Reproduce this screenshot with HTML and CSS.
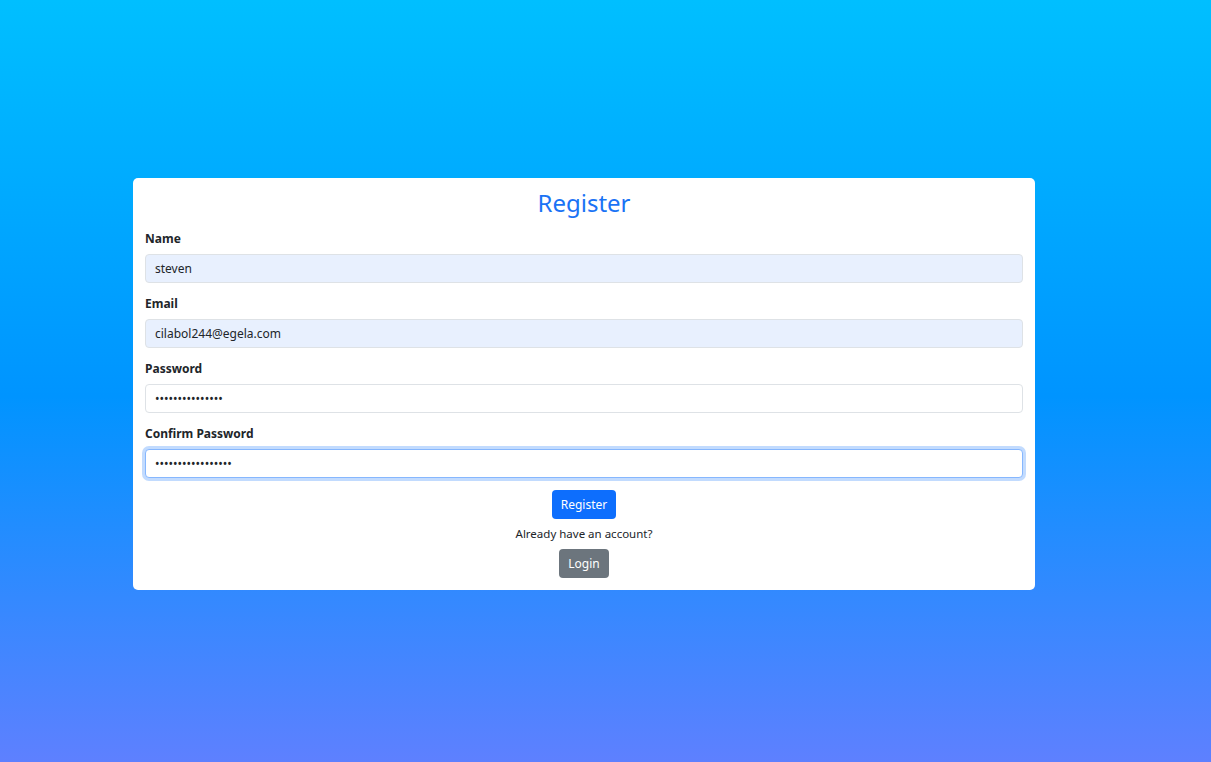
FILE: index.html
```html
<!DOCTYPE html>
<html>
<head>
<meta charset="utf-8">
<link rel="stylesheet" href="styles.css">
</head>
<body>
<div class="page">
  <div class="card">
    <h1 class="title">Register</h1>
    <div class="group">
      <label class="label">Name</label>
      <input class="field autofill" type="text" value="steven">
    </div>
    <div class="group">
      <label class="label">Email</label>
      <input class="field autofill" type="text" value="cilabol244@egela.com">
    </div>
    <div class="group">
      <label class="label">Password</label>
      <input class="field" type="password" value="abcdefghijklmno">
    </div>
    <div class="group">
      <label class="label">Confirm Password</label>
      <input class="field focus" type="password" value="abcdefghijklmnopq">
    </div>
    <div class="actions">
      <button class="btn primary">Register</button>
      <p class="note">Already have an account?</p>
      <button class="btn secondary">Login</button>
    </div>
  </div>
</div>
</body>
</html>
```
FILE: styles.css
```css
* { box-sizing: border-box; }
html, body { margin: 0; height: 100%; }
body {
  font-family: "Noto Sans", "Open Sans", sans-serif;
  background: linear-gradient(to bottom, #00bfff 0%, #0094ff 52%, #5e80ff 100%);
  color: #212529;
}
.page {
  height: 762px;
  display: flex;
  align-items: flex-start;
  padding: 178px 0 0 133px;
}
.card {
  width: 902px;
  background: #fff;
  border-radius: 5px;
  padding: 12px 12px 12px;
}
.title {
  margin: 0 0 14px;
  text-align: center;
  font-weight: 400;
  font-size: 24px;
  line-height: 25px;
  color: #1a73f5;
}
.group { margin-bottom: 11px; }
.label {
  display: block;
  font-size: 12px;
  font-weight: 700;
  line-height: 20px;
  margin-bottom: 5px;
  color: #212529;
}
.field {
  display: block;
  width: 100%;
  height: 29px;
  padding: 0 9px;
  font-family: inherit;
  font-size: 12px;
  color: #212529;
  background: #fff;
  border: 1px solid #dee2e6;
  border-radius: 4px;
  outline: none;
}
.field.autofill { background: #e8f0fe; }
.field.focus {
  border-color: #86b7fe;
  box-shadow: 0 0 0 3px rgba(13, 110, 253, 0.25);
}
.actions {
  display: flex;
  flex-direction: column;
  align-items: center;
  padding-top: 1px;
}
.btn {
  font-family: inherit;
  font-size: 12px;
  height: 29px;
  padding: 0 9px;
  border: none;
  border-radius: 4px;
  color: #fff;
}
.primary { background: #0d6efd; }
.secondary { background: #6c757d; }
.note {
  margin: 0;
  font-size: 11.5px;
  line-height: 30px;
  color: #212529;
}
```
